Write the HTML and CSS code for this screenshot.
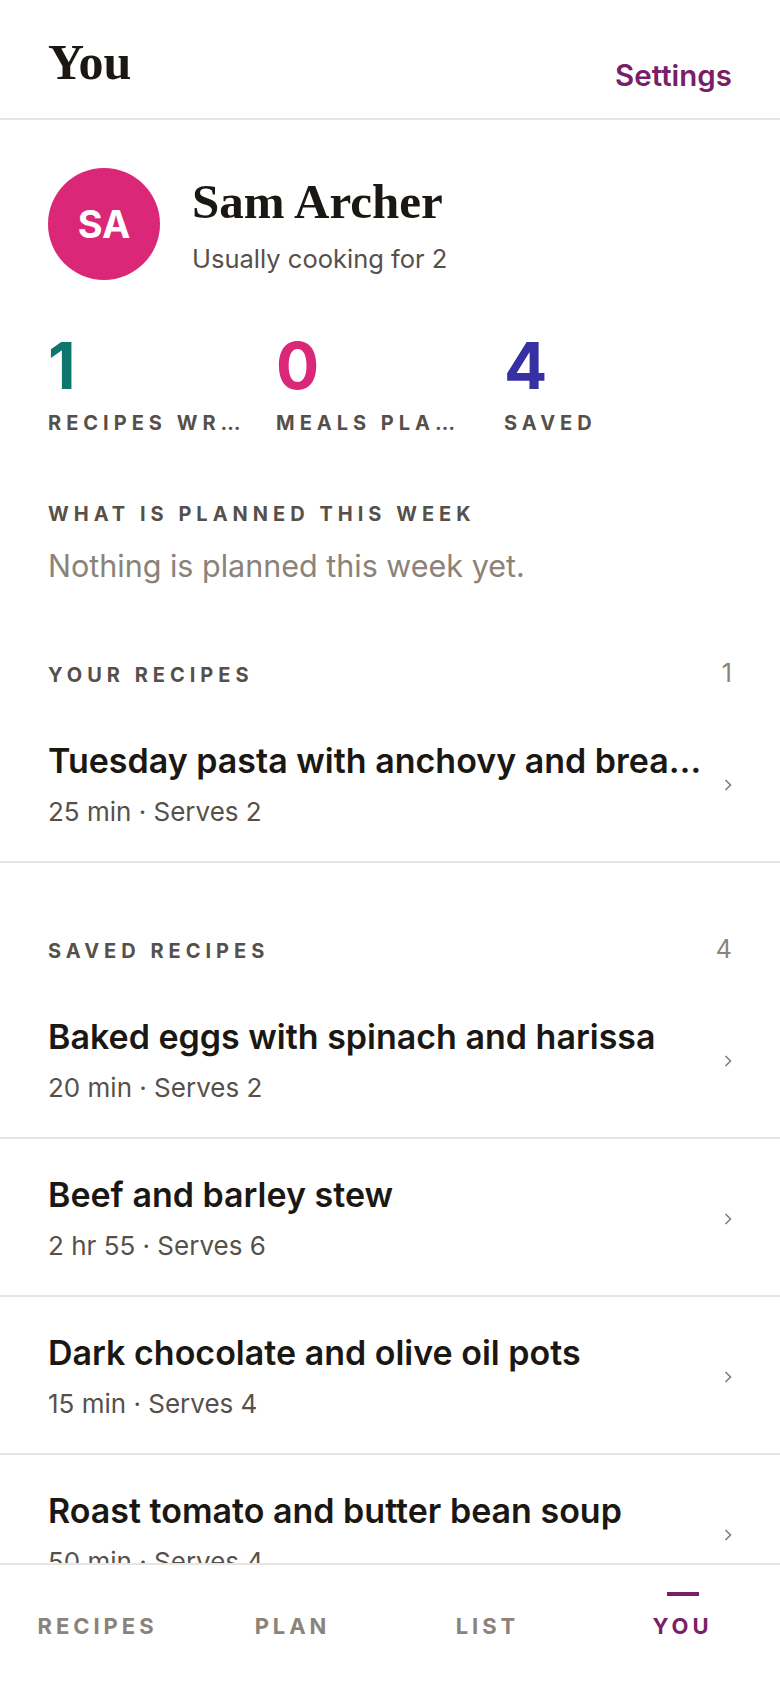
FILE: index.html
```html
<!DOCTYPE html>
<html lang="en">
<head>
  <meta charset="UTF-8">
  <meta name="viewport" content="width=device-width, initial-scale=1.0">
  <title>You</title>
  <link rel="stylesheet" href="styles.css">
</head>
<body>
  <header class="top-bar">
    <h1>You</h1>
    <a class="settings-link" href="#">Settings</a>
  </header>

  <main class="page">
    <section class="profile">
      <div class="avatar">SA</div>
      <div class="profile-text">
        <h2>Sam Archer</h2>
        <p>Usually cooking for 2</p>
      </div>
    </section>

    <section class="stats">
      <div class="stat">
        <div class="stat-num teal">1</div>
        <div class="stat-label">Recipes written</div>
      </div>
      <div class="stat">
        <div class="stat-num pink">0</div>
        <div class="stat-label">Meals planned</div>
      </div>
      <div class="stat">
        <div class="stat-num indigo">4</div>
        <div class="stat-label">Saved</div>
      </div>
    </section>

    <section class="planned">
      <h3 class="label">What is planned this week</h3>
      <p class="empty-note">Nothing is planned this week yet.</p>
    </section>

    <section class="section">
      <div class="section-head">
        <h3 class="label">Your recipes</h3>
        <span class="count">1</span>
      </div>
      <ul class="recipe-list">
        <li class="recipe">
          <div class="recipe-text">
            <div class="recipe-title">Tuesday pasta with anchovy and breadcrumbs</div>
            <div class="recipe-meta">25 min · Serves 2</div>
          </div>
          <svg class="chevron" width="8" height="12" viewBox="0 0 8 12"><path d="M1.5 1 L6.5 6 L1.5 11"/></svg>
        </li>
      </ul>
    </section>

    <section class="section">
      <div class="section-head">
        <h3 class="label">Saved recipes</h3>
        <span class="count">4</span>
      </div>
      <ul class="recipe-list">
        <li class="recipe">
          <div class="recipe-text">
            <div class="recipe-title">Baked eggs with spinach and harissa</div>
            <div class="recipe-meta">20 min · Serves 2</div>
          </div>
          <svg class="chevron" width="8" height="12" viewBox="0 0 8 12"><path d="M1.5 1 L6.5 6 L1.5 11"/></svg>
        </li>
        <li class="recipe">
          <div class="recipe-text">
            <div class="recipe-title">Beef and barley stew</div>
            <div class="recipe-meta">2 hr 55 · Serves 6</div>
          </div>
          <svg class="chevron" width="8" height="12" viewBox="0 0 8 12"><path d="M1.5 1 L6.5 6 L1.5 11"/></svg>
        </li>
        <li class="recipe">
          <div class="recipe-text">
            <div class="recipe-title">Dark chocolate and olive oil pots</div>
            <div class="recipe-meta">15 min · Serves 4</div>
          </div>
          <svg class="chevron" width="8" height="12" viewBox="0 0 8 12"><path d="M1.5 1 L6.5 6 L1.5 11"/></svg>
        </li>
        <li class="recipe">
          <div class="recipe-text">
            <div class="recipe-title">Roast tomato and butter bean soup</div>
            <div class="recipe-meta">50 min · Serves 4</div>
          </div>
          <svg class="chevron" width="8" height="12" viewBox="0 0 8 12"><path d="M1.5 1 L6.5 6 L1.5 11"/></svg>
        </li>
      </ul>
    </section>
  </main>

  <nav class="tab-bar">
    <a class="tab" href="#"><span class="tab-mark"></span>Recipes</a>
    <a class="tab" href="#"><span class="tab-mark"></span>Plan</a>
    <a class="tab" href="#"><span class="tab-mark"></span>List</a>
    <a class="tab active" href="#"><span class="tab-mark"></span>You</a>
  </nav>
</body>
</html>
```

FILE: styles.css
```css
body {
  font-family: Inter, "Noto Sans", sans-serif;
  background-color: #ffffff;
  color: #1b1814;
  margin: 0;
  padding: 0 0 140px;
}
h1, h2, h3, p, ul {
  margin: 0;
  padding: 0;
}
a {
  text-decoration: none;
}

.top-bar {
  display: flex;
  justify-content: space-between;
  align-items: flex-end;
  padding: 31px 48px 25px;
  border-bottom: 2px solid #e8e4df;
}
.top-bar h1 {
  font-family: "Liberation Serif", "Times New Roman", serif;
  font-size: 50px;
  font-weight: bold;
  line-height: 62px;
  color: #1b1814;
}
.settings-link {
  font-size: 29.5px;
  font-weight: 600;
  line-height: 34px;
  color: #7b1e6a;
  margin-bottom: 1px;
}

.page {
  padding: 48px 48px 0;
}

.profile {
  display: flex;
  align-items: center;
  gap: 32px;
}
.avatar {
  width: 112px;
  height: 112px;
  border-radius: 50%;
  background: #db2777;
  color: white;
  font-size: 38px;
  font-weight: 700;
  display: flex;
  justify-content: center;
  align-items: center;
  flex-shrink: 0;
}
.profile-text h2 {
  font-family: "Liberation Serif", "Times New Roman", serif;
  font-size: 49px;
  font-weight: bold;
  line-height: 58px;
  color: #1b1814;
}
.profile-text p {
  margin-top: 11px;
  font-size: 25.5px;
  line-height: 34px;
  color: #57504a;
}

.stats {
  display: grid;
  grid-template-columns: repeat(3, 1fr);
  margin-top: 54px;
}
.stat {
  min-width: 0;
  padding-right: 32px;
}
.stat-num {
  font-size: 64px;
  font-weight: 700;
  line-height: 64px;
}
.teal { color: #0f766e; }
.pink { color: #db2777; }
.indigo { color: #3730a3; }

.label {
  font-size: 20px;
  font-weight: 700;
  line-height: 24px;
  letter-spacing: 0.25em;
  text-transform: uppercase;
  color: #57504a;
}
.stat-label {
  margin-top: 13px;
  font-size: 20px;
  font-weight: 700;
  line-height: 24px;
  letter-spacing: 0.25em;
  text-transform: uppercase;
  color: #57504a;
  white-space: nowrap;
  overflow: hidden;
  text-overflow: ellipsis;
}

.planned {
  margin-top: 67px;
}
.empty-note {
  margin-top: 19px;
  font-size: 30.5px;
  line-height: 42px;
  color: #8b8279;
}

.section {
  margin-top: 74px;
}
.section-head {
  display: flex;
  justify-content: space-between;
  align-items: baseline;
  margin-bottom: 18px;
}
.count {
  font-size: 25px;
  line-height: 24px;
  color: #8b8279;
}

.recipe-list {
  list-style: none;
  margin: 0 -48px;
}
.recipe {
  display: flex;
  align-items: center;
  gap: 22px;
  padding: 36px 48px 32px;
  border-bottom: 2px solid #e8e4df;
}
.recipe-text {
  flex: 1;
  min-width: 0;
}
.recipe-title {
  font-size: 34px;
  font-weight: 600;
  line-height: 40px;
  color: #1b1814;
  white-space: nowrap;
  overflow: hidden;
  text-overflow: ellipsis;
}
.recipe-meta {
  margin-top: 14px;
  font-size: 26px;
  line-height: 34px;
  color: #57504a;
}
.chevron {
  flex-shrink: 0;
}
.chevron path {
  fill: none;
  stroke: #8b8279;
  stroke-width: 1.7;
}

.tab-bar {
  position: fixed;
  left: 0;
  right: 0;
  bottom: 0;
  height: 123px;
  background: #ffffff;
  border-top: 2px solid #e8e4df;
  display: grid;
  grid-template-columns: repeat(4, 1fr);
}
.tab {
  display: flex;
  flex-direction: column;
  align-items: center;
  padding-top: 27px;
  font-size: 22px;
  font-weight: 700;
  line-height: 26px;
  letter-spacing: 0.18em;
  text-transform: uppercase;
  color: #8b8279;
}
.tab-mark {
  width: 32px;
  height: 4px;
  margin-bottom: 17px;
  background: transparent;
}
.tab.active {
  color: #7b1e6a;
}
.tab.active .tab-mark {
  background: #7b1e6a;
}
```
